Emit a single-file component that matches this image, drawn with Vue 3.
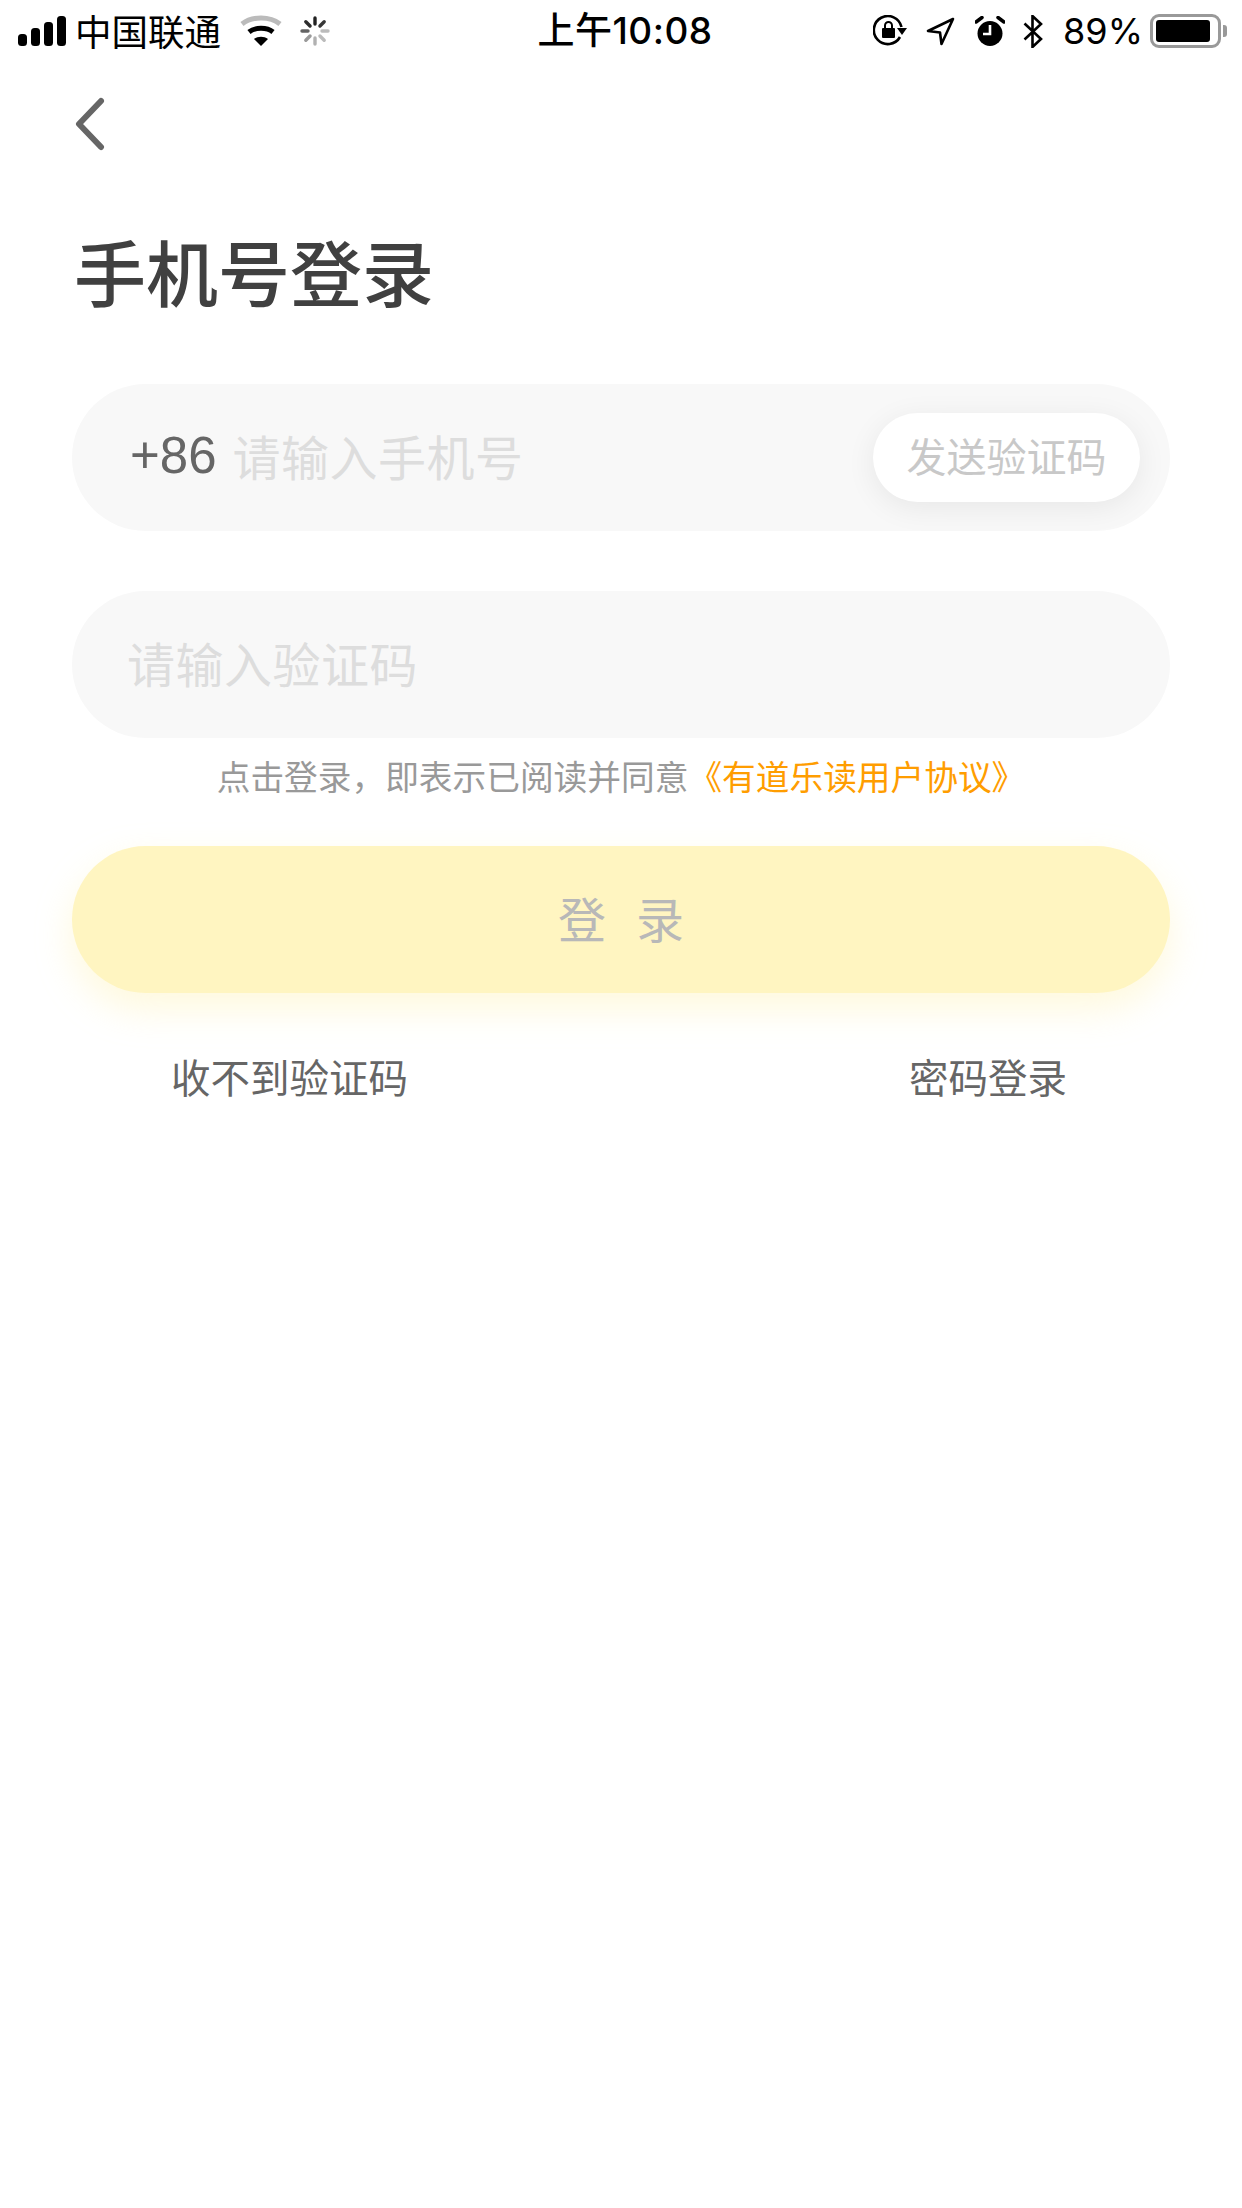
<script setup>
const spokes = [
  { a: 0, o: 1 }, { a: 45, o: 0.9 }, { a: 90, o: 0.3 }, { a: 135, o: 0.3 },
  { a: 180, o: 0.35 }, { a: 225, o: 0.45 }, { a: 270, o: 0.7 }, { a: 315, o: 0.95 }
]
const bars = [
  { x: 0, h: 12 }, { x: 13, h: 18 }, { x: 26, h: 24 }, { x: 39, h: 30 }
]
</script>

<template>
  <div class="page">
    <header class="status">
      <div class="status-left">
        <svg class="signal" width="48" height="30" viewBox="0 0 48 30">
          <rect v-for="b in bars" :key="b.x" :x="b.x" :y="30 - b.h" width="9" :height="b.h" rx="3.5" fill="#000" />
        </svg>
        <span class="carrier">中国联通</span>
        <svg class="wifi" width="42" height="32" viewBox="0 0 42 32">
          <path d="M2 9C12 1 30 1 40 9" fill="none" stroke="#bbb" stroke-width="5" />
          <path d="M9 17C15 12 27 12 33 17" fill="none" stroke="#000" stroke-width="5" />
          <path d="M14 24C18 21 24 21 28 24L21 31Z" fill="#000" />
        </svg>
        <svg class="spinner" width="30" height="30" viewBox="0 0 30 30">
          <line v-for="s in spokes" :key="s.a" x1="15" y1="2" x2="15" y2="8" stroke="#222" stroke-width="3.4" stroke-linecap="round" :opacity="s.o" :transform="`rotate(${s.a} 15 15)`" />
        </svg>
      </div>
      <div class="status-time">上午10:08</div>
      <div class="status-right">
        <svg width="34" height="32" viewBox="0 0 34 32">
          <path d="M27 22A14 14 0 1 1 28.500 12" fill="none" stroke="#000" stroke-width="2.600" />
          <path d="M24 13H34L29 20Z" fill="#000" />
          <rect x="9" y="13" width="13" height="10" rx="1" fill="#000" />
          <path d="M12 13V10.500A3.500 3.500 0 0 1 19 10.500V13" fill="none" stroke="#000" stroke-width="2" />
        </svg>
        <svg class="loc" width="29" height="29" viewBox="0 0 29 29">
          <path d="M27 2L2 14L14 15.500L15.500 27Z" fill="none" stroke="#000" stroke-width="2.600" stroke-linejoin="round" />
        </svg>
        <svg class="alarm" width="30" height="31" viewBox="0 0 30 31">
          <circle cx="15" cy="17.500" r="12.500" fill="#000" />
          <path d="M15 9V18H8" fill="none" stroke="#fff" stroke-width="2.600" />
          <path d="M1 6L7 1.500M29 6L23 1.500" fill="none" stroke="#000" stroke-width="3.500" stroke-linecap="round" />
        </svg>
        <svg class="bt" width="20" height="33" viewBox="0 0 20 33">
          <path d="M1.500 8.500L18 24L9.500 32V1L18 9L1.500 24.500" fill="none" stroke="#000" stroke-width="2.600" />
        </svg>
        <span class="pct">89%</span>
        <div class="battery">
          <div class="cell"><div class="fill"></div></div>
          <div class="nub"></div>
        </div>
      </div>
    </header>

    <nav class="nav">
      <svg width="32" height="54" viewBox="0 0 32 54">
        <path d="M27 4L5 27L27 50" fill="none" stroke="#666" stroke-width="6" stroke-linecap="round" stroke-linejoin="round" />
      </svg>
    </nav>

    <h1 class="title">手机号登录</h1>

    <main class="form">
      <div class="field first">
        <span class="code">+86</span>
        <span class="hint">请输入手机号</span>
        <button class="send"><span class="lift">发送验证码</span></button>
      </div>
      <div class="field second">
        <span class="hint">请输入验证码</span>
      </div>
      <p class="terms">点击登录，即表示已阅读并同意<span class="link">《有道乐读用户协议》</span></p>
      <button class="login"><span class="lift">登<span class="gap"></span>录</span></button>
      <div class="links">
        <span>收不到验证码</span>
        <span>密码登录</span>
      </div>
    </main>
  </div>
</template>

<style>
html, body { margin: 0; background: #fff; }
</style>

<style scoped>
.page {
  width: 1242px;
  height: 2208px;
  background: #fff;
  overflow: hidden;
  font-family: "Noto Sans CJK SC", "Liberation Sans", sans-serif;
}
.status {
  height: 60px;
  display: grid;
  grid-template-columns: 1fr auto 1fr;
  align-items: center;
  color: #000;
}
.status-left {
  display: flex;
  align-items: center;
  padding-left: 18px;
}
.carrier { font-size: 36.500px; line-height: 60px; margin-left: 9px; }
.wifi { margin-left: 19px; }
.spinner { margin-left: 18px; }
.status-time {
  font-size: 37px;
  font-weight: 500;
  line-height: 62px;
  letter-spacing: 0.5px;
  font-family: "Inter", "Noto Sans CJK SC", sans-serif;
  padding-left: 8px;
}
.status-right {
  display: flex;
  align-items: center;
  justify-content: flex-end;
  padding-right: 15px;
}
.loc { margin-left: 19px; }
.alarm { margin-left: 20px; }
.bt { margin-left: 18px; }
.pct {
  font-family: "Inter", sans-serif;
  font-size: 36px;
  line-height: 60px;
  margin-left: 20px;
}
.battery { display: flex; align-items: center; margin-left: 7px; }
.cell {
  width: 71px;
  height: 34px;
  box-sizing: border-box;
  border: 3px solid #999;
  border-radius: 9px;
  padding: 3px;
}
.fill { width: 54px; height: 22px; background: #000; border-radius: 3px; }
.nub { width: 4px; height: 12px; background: #999; border-radius: 0 3px 3px 0; margin-left: 2px; }

.nav { height: 128px; padding-left: 74px; display: flex; align-items: center; }
.title {
  margin: 40px 0 0 74px;
  font-size: 72px;
  line-height: 84px;
  font-weight: 500;
  color: #404040;
}
.form {
  margin: 0 72px;
  padding-top: 72px;
  display: flex;
  flex-direction: column;
}
.field {
  height: 147px;
  border-radius: 73.500px;
  background: #f8f8f8;
  display: flex;
  align-items: center;
  box-sizing: border-box;
}
.first { padding: 0 30px 0 58px; }
.second { margin-top: 60px; padding-left: 55px; }
.code {
  font-family: "Liberation Sans", sans-serif;
  font-size: 51px;
  color: #666;
  margin: 0 16px 5px 0;
}
.hint {
  font-size: 48px;
  color: #ddd;
  letter-spacing: 0.500px;
  margin-bottom: 5px;
}
.send {
  margin-left: auto;
  width: 267px;
  height: 89px;
  border: 0;
  border-radius: 44.500px;
  background: #fff;
  color: #c8c8c8;
  font-family: inherit;
  font-size: 40px;
  padding: 0;
  box-shadow: 0 6px 30px rgba(0, 0, 0, 0.07);
}
.lift { position: relative; top: -3px; }
.terms {
  margin: 14px 0 0;
  height: 48px;
  line-height: 48px;
  text-align: center;
  font-size: 33.700px;
  color: #999;
}
.link { color: #ff9d00; }
.login {
  margin-top: 46px;
  height: 147px;
  border: 0;
  border-radius: 73.500px;
  background: #fff5c1;
  color: #b8b8b8;
  font-family: inherit;
  font-size: 48px;
  padding: 0;
  display: flex;
  align-items: center;
  justify-content: center;
  box-shadow: 0 16px 36px rgba(254, 240, 170, 0.4);
}
.gap { display: inline-block; width: 30px; }
.links {
  margin-top: 53px;
  padding: 0 103px 0 99px;
  display: flex;
  justify-content: space-between;
  font-size: 39.500px;
  line-height: 60px;
  color: #666;
}
</style>
